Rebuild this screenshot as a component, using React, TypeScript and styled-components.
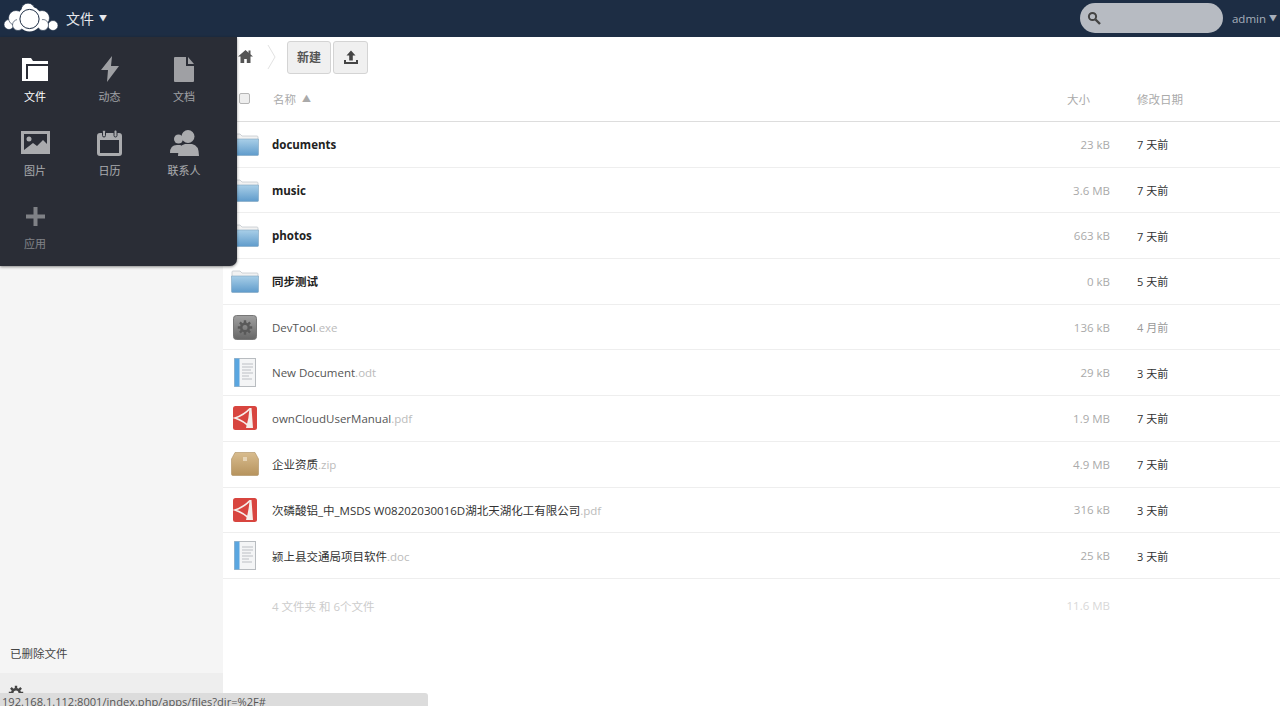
import React from 'react';
import styled, { createGlobalStyle } from 'styled-components';

const FONT = `"Open Sans", "Noto Sans CJK SC", sans-serif`;

const GlobalStyle = createGlobalStyle`
  html, body { margin: 0; padding: 0; height: 100%; overflow: hidden; background: #fff; }
  body { font-family: ${FONT}; font-size: 12px; color: #555; }
  * { box-sizing: border-box; }
`;

const Page = styled.div`
  position: relative;
  height: 706px;
  width: 1280px;
  display: flex;
  flex-direction: column;
  overflow: hidden;
`;

const Header = styled.header`
  height: 37px;
  flex: none;
  background: #1d2d44;
  display: flex;
  align-items: center;
  padding: 0 3px 1px 4px;
`;

const AppTitle = styled.div`
  margin-left: 8px;
  color: #e6e8ec;
  font-size: 14px;
  display: flex;
  align-items: center;
  gap: 5px;
`;

const Caret = styled.span`
  font-size: 8px;
  line-height: 1;
`;

const Search = styled.div`
  margin-left: auto;
  width: 143px;
  height: 30px;
  border-radius: 15px;
  background: #b7bbc2;
  display: flex;
  align-items: center;
  padding-left: 7px;
`;

const User = styled.div`
  margin-left: 9px;
  color: #a7afbb;
  font-size: 11.5px;
  display: flex;
  align-items: center;
  gap: 3px;
`;

const Body = styled.div`
  flex: 1;
  display: flex;
  min-height: 0;
`;

const Sidebar = styled.aside`
  width: 223px;
  flex: none;
  background: #f5f5f5;
  display: flex;
  flex-direction: column;
  justify-content: flex-end;
`;

const TrashLink = styled.div`
  height: 41px;
  padding: 0 0 0 10px;
  display: flex;
  align-items: center;
  font-size: 11.5px;
  color: #444;
`;

const SettingsBar = styled.div`
  height: 33px;
  background: #eee;
  padding: 12px 0 0 8px;
`;

const Main = styled.main`
  flex: 1;
  min-width: 0;
`;

const Controls = styled.div`
  height: 40px;
  display: flex;
  align-items: center;
  padding: 0 0 0 15px;
`;

const Crumb = styled.div`
  display: flex;
  align-items: center;
  margin-right: 11px;
  gap: 14px;
  margin-top: -1px;
`;

const ToolButton = styled.button<{ $wide?: boolean }>`
  width: ${p => (p.$wide ? '44px' : '35px')};
  height: 33px;
  padding: 0;
  border: 1px solid #d4d4d4;
  border-radius: 3px;
  background: #f0f0f0;
  color: #555;
  font-family: ${FONT};
  font-size: 12px;
  font-weight: 600;
  display: flex;
  align-items: center;
  justify-content: center;
  & + & { margin-left: 2px; }
`;

const COLUMNS = '49px 1fr 107px 143px';

const HeadRow = styled.div`
  height: 45px;
  display: grid;
  grid-template-columns: ${COLUMNS};
  align-items: center;
  border-bottom: 1px solid #ddd;
  color: #aaa;
  font-size: 11.5px;
`;

const CheckBox = styled.span`
  width: 11px;
  height: 11px;
  margin: 0 0 2px 16px;
  border: 1px solid #b5b5b5;
  border-radius: 2px;
  background: #eee;
`;

const HeadName = styled.div`
  padding: 0 0 0 1px;
  margin-top: -1px;
  display: flex;
  gap: 6px;
  align-items: center;
`;

const SortMark = styled.span`
  font-size: 9px;
`;

const HeadSize = styled.div`
  text-align: right;
  padding-right: 47px;
  margin-top: -1px;
`;

const HeadDate = styled.div`
  margin-top: -1px;
`;

const Row = styled.div`
  height: 45.7px;
  display: grid;
  grid-template-columns: ${COLUMNS};
  align-items: center;
  border-bottom: 1px solid #eee;
`;

const IconCell = styled.div`
  display: flex;
  justify-content: center;
  padding-right: 6px;
`;

const Name = styled.div<{ $bold?: boolean }>`
  font-size: 11.5px;
  font-weight: ${p => (p.$bold ? 700 : 400)};
  color: ${p => (p.$bold ? '#222' : '#555')};
  white-space: nowrap;
`;

const CjkName = styled(Name)`
  color: #333;
`;

const Ext = styled.span`
  color: #bbb;
`;

const Size = styled.div`
  text-align: right;
  padding-right: 27px;
  color: #aaa;
  font-size: 11.5px;
`;

const DateCell = styled.div<{ $old?: boolean }>`
  color: ${p => (p.$old ? '#999' : '#333')};
  font-size: 11px;
`;

const SummaryRow = styled.div`
  height: 54px;
  display: grid;
  grid-template-columns: ${COLUMNS};
  align-items: center;
  color: #ccc;
  font-size: 11.5px;
`;

const SummarySize = styled(Size)`
  color: #d8d8d8;
`;

const AppMenu = styled.nav`
  position: absolute;
  top: 37px;
  left: 0;
  width: 237px;
  height: 229px;
  background: #2a2d36;
  border-bottom-right-radius: 7px;
  box-shadow: 0 1px 3px rgba(0, 0, 0, 0.45);
  display: grid;
  grid-template-columns: repeat(3, 70px);
  grid-auto-rows: 73.5px;
  column-gap: 4.5px;
  padding-top: 18px;
`;

const MenuItem = styled.div<{ $level: number }>`
  display: flex;
  flex-direction: column;
  align-items: center;
  gap: 6px;
  font-size: 11px;
  line-height: 16px;
  color: #fff;
  opacity: ${p => p.$level};
`;

const IconBox = styled.div`
  width: 30px;
  height: 28px;
  display: flex;
  align-items: center;
  justify-content: center;
`;

const StatusBar = styled.div`
  position: absolute;
  left: 0;
  bottom: 0;
  width: 428px;
  height: 13px;
  padding-left: 2px;
  background: #dcdcdc;
  border-top-right-radius: 3px;
  color: #555;
  font-size: 11.1px;
  line-height: 18px;
  overflow: hidden;
  white-space: nowrap;
`;

const CloudLogo = () => (
  <svg width="54" height="30" viewBox="0 0 54 30">
    <g fill="#fff" stroke="#1d2d44" strokeWidth="0.6">
      <circle cx="5" cy="21.5" r="5" />
      <circle cx="49" cy="22.5" r="5" />
      <circle cx="12" cy="15" r="7.5" />
      <circle cx="38" cy="15" r="7.5" />
      <circle cx="14" cy="22" r="5.5" />
      <circle cx="39" cy="22" r="5.5" />
      <circle cx="24" cy="7" r="6.8" />
    </g>
    <circle cx="25.5" cy="16" r="12.5" fill="#fff" />
    <circle cx="25.5" cy="16" r="9.6" fill="#fff" stroke="#1d2d44" strokeWidth="1" />
  </svg>
);

const SearchIcon = () => (
  <svg width="14" height="14" viewBox="0 0 14 14">
    <circle cx="5.5" cy="5.5" r="3.6" fill="none" stroke="#444" strokeWidth="2" />
    <path d="M8.5 8.5 L13 13" stroke="#444" strokeWidth="2.4" />
  </svg>
);

const HomeIcon = () => (
  <svg width="15" height="13" viewBox="0 0 15 13">
    <path d="M7.5 0 L15 6.5 H12.5 V13 H8.8 V9 H6.2 V13 H2.5 V6.5 H0 Z" fill="#555" />
    <rect x="10.5" y="0.5" width="2" height="4" fill="#555" />
  </svg>
);

const CrumbArrow = () => (
  <svg width="9" height="26" viewBox="0 0 9 26">
    <path d="M1 1 L8 13 L1 25" fill="none" stroke="#e2e2e2" strokeWidth="1" />
  </svg>
);

const UploadIcon = () => (
  <svg width="16" height="15" viewBox="0 0 16 15">
    <path d="M8 0.5 L12.5 5.5 H9.8 V10.5 H6.2 V5.5 H3.5 Z" fill="#444" />
    <path d="M1 10 V14 H15 V10 H13 V12 H3 V10 Z" fill="#444" />
  </svg>
);

const GearIcon = ({ size = 16, color = '#444' }: { size?: number; color?: string }) => (
  <svg width={size} height={size} viewBox="0 0 16 16">
    <circle cx="8" cy="8" r="3.8" fill="none" stroke={color} strokeWidth="2.6" />
    <path d="M8 0.8 V3.4 M8 12.6 V15.2 M0.8 8 H3.4 M12.6 8 H15.2 M2.9 2.9 L4.8 4.8 M11.2 11.2 L13.1 13.1 M13.1 2.9 L11.2 4.8 M4.8 11.2 L2.9 13.1" stroke={color} strokeWidth="2.4" />
  </svg>
);

const FolderIcon = () => (
  <svg width="28" height="23" viewBox="0 0 28 23">
    <defs>
      <linearGradient id="folderBody" x1="0" y1="0" x2="0" y2="1">
        <stop offset="0" stopColor="#a9cfe8" />
        <stop offset="1" stopColor="#5f9bcb" />
      </linearGradient>
    </defs>
    <path d="M1 2 Q1 1 2 1 H9 L11 3 H26 Q27 3 27 4 V8 H1 Z" fill="#f2f2f2" stroke="#c4c9ce" strokeWidth="0.8" />
    <path d="M0.5 6 H27.5 V21.5 Q27.5 22.5 26.5 22.5 H1.5 Q0.5 22.5 0.5 21.5 Z" fill="url(#folderBody)" stroke="#7fa4c0" strokeWidth="0.6" />
  </svg>
);

const ExeIcon = () => (
  <svg width="24" height="25" viewBox="0 0 24 25">
    <defs>
      <linearGradient id="exeBody" x1="0" y1="0" x2="0" y2="1">
        <stop offset="0" stopColor="#a0a0a0" />
        <stop offset="1" stopColor="#666" />
      </linearGradient>
    </defs>
    <rect x="0.5" y="0.5" width="23" height="24" rx="3" fill="url(#exeBody)" stroke="#777" />
    <g transform="translate(4 4.5)"><GearIcon color="#595959" /></g>
  </svg>
);

const DocIcon = () => (
  <svg width="22" height="29" viewBox="0 0 22 29">
    <rect x="0.5" y="0.5" width="21" height="28" fill="#f4f5f6" stroke="#b8bcc0" />
    <rect x="0.5" y="0.5" width="5" height="28" fill="#5aa6e0" />
    <path d="M8 6 H19 M8 9 H19 M8 12 H17 M8 15 H19 M8 18 H15 M8 21 H18" stroke="#bcbfc3" strokeWidth="1.2" />
  </svg>
);

const PdfIcon = () => (
  <svg width="24" height="24" viewBox="0 0 24 24">
    <rect x="0" y="0" width="24" height="24" rx="2.5" fill="#d8453f" />
    <path d="M17 2.5 Q11 9 2 12 Q11 15 17 21.5" fill="none" stroke="#f6eeea" strokeWidth="1.8" />
    <path d="M16.5 2 H18.5 L20 22 H13 Q16 12 16.5 2 Z" fill="#f6eeea" />
  </svg>
);

const ZipIcon = () => (
  <svg width="28" height="24" viewBox="0 0 28 24">
    <defs>
      <linearGradient id="zipBody" x1="0" y1="0" x2="0" y2="1">
        <stop offset="0" stopColor="#d8bc8e" />
        <stop offset="1" stopColor="#b6935d" />
      </linearGradient>
    </defs>
    <path d="M4 0.5 H24 L27.5 7 V22 Q27.5 23.5 26 23.5 H2 Q0.5 23.5 0.5 22 V7 Z" fill="url(#zipBody)" stroke="#ad8f60" strokeWidth="0.6" />
    <rect x="12" y="5" width="4" height="4" fill="#e6d4b6" />
  </svg>
);

const FilesIcon = () => (
  <svg width="26" height="23" viewBox="0 0 26 23" fill="#fff">
    <path d="M0 0 H9 L11 3 H11 H26 V6 H4 V21 H26 V23 H0 Z" />
    <path d="M6 8 H26 V23 H6 Z" />
  </svg>
);

const BoltIcon = () => (
  <svg width="18" height="26" viewBox="0 0 18 26" fill="#fff">
    <path d="M11 0 L0 14 H7 L6 26 L18 10 H10 Z" />
  </svg>
);

const PageIcon = () => (
  <svg width="20" height="25" viewBox="0 0 20 25" fill="#fff">
    <path d="M1 0 H12 V9 H20 V24 Q20 25 19 25 H1 Q0 25 0 24 V1 Q0 0 1 0 Z" />
    <path d="M14 0 L20 7 H14 Z" />
  </svg>
);

const PictureIcon = () => (
  <svg width="29" height="23" viewBox="0 0 29 23">
    <path fillRule="evenodd" fill="#fff" d="M0 0 H29 V23 H0 Z M3 3 V20 H26 V3 Z" />
    <circle cx="8" cy="8" r="2.5" fill="#fff" />
    <path d="M3 19 L12 12 L16 15 L22 9 L26 13 V20 H3 Z" fill="#fff" />
  </svg>
);

const CalendarIcon = () => (
  <svg width="26" height="26" viewBox="0 0 26 26">
    <path fillRule="evenodd" fill="#fff" d="M3 3 H22 Q25 3 25 6 V23 Q25 26 22 26 H3 Q0 26 0 23 V6 Q0 3 3 3 Z M3 10 V23 H22 V10 Z" />
    <rect x="5.5" y="0" width="3" height="7" rx="1.5" fill="#fff" stroke="#2a2d36" />
    <rect x="17" y="0" width="3" height="7" rx="1.5" fill="#fff" stroke="#2a2d36" />
  </svg>
);

const ContactsIcon = () => (
  <svg width="29" height="26" viewBox="0 0 29 26" fill="#fff">
    <circle cx="8.5" cy="9" r="4.5" />
    <path d="M0 23 Q0 15 7 15 H10 Q12 15 12 19 V23 Z" />
    <circle cx="18" cy="6.5" r="6.5" />
    <path d="M8 26 Q8 15 15 14 H22 Q29 15 29 26 Z" />
  </svg>
);

const PlusIcon = () => (
  <svg width="19" height="19" viewBox="0 0 19 19" fill="#fff">
    <path d="M7.5 0 H11.5 V7.5 H19 V11.5 H11.5 V19 H7.5 V11.5 H0 V7.5 H7.5 Z" />
  </svg>
);

const menuItems = [
  { label: '文件', icon: <FilesIcon />, level: 1 },
  { label: '动态', icon: <BoltIcon />, level: 0.55 },
  { label: '文档', icon: <PageIcon />, level: 0.55 },
  { label: '图片', icon: <PictureIcon />, level: 0.6 },
  { label: '日历', icon: <CalendarIcon />, level: 0.6 },
  { label: '联系人', icon: <ContactsIcon />, level: 0.6 },
  { label: '应用', icon: <PlusIcon />, level: 0.4 },
];

const files = [
  { name: 'documents', ext: '', icon: <FolderIcon />, bold: true, size: '23 kB', date: '7 天前' },
  { name: 'music', ext: '', icon: <FolderIcon />, bold: true, size: '3.6 MB', date: '7 天前' },
  { name: 'photos', ext: '', icon: <FolderIcon />, bold: true, size: '663 kB', date: '7 天前' },
  { name: '同步测试', ext: '', icon: <FolderIcon />, bold: true, size: '0 kB', date: '5 天前' },
  { name: 'DevTool', ext: '.exe', icon: <ExeIcon />, size: '136 kB', date: '4 月前', old: true },
  { name: 'New Document', ext: '.odt', icon: <DocIcon />, size: '29 kB', date: '3 天前' },
  { name: 'ownCloudUserManual', ext: '.pdf', icon: <PdfIcon />, size: '1.9 MB', date: '7 天前' },
  { name: '企业资质', ext: '.zip', icon: <ZipIcon />, cjk: true, size: '4.9 MB', date: '7 天前' },
  { name: '次磷酸铝_中_MSDS W08202030016D湖北天湖化工有限公司', ext: '.pdf', icon: <PdfIcon />, cjk: true, size: '316 kB', date: '3 天前' },
  { name: '颍上县交通局项目软件', ext: '.doc', icon: <DocIcon />, cjk: true, size: '25 kB', date: '3 天前' },
];

export default function App() {
  return (
    <Page>
      <GlobalStyle />
      <Header>
        <CloudLogo />
        <AppTitle>文件 <Caret>▼</Caret></AppTitle>
        <Search><SearchIcon /></Search>
        <User>admin <Caret>▼</Caret></User>
      </Header>
      <Body>
        <Sidebar>
          <TrashLink>已删除文件</TrashLink>
          <SettingsBar><GearIcon /></SettingsBar>
        </Sidebar>
        <Main>
          <Controls>
            <Crumb><HomeIcon /><CrumbArrow /></Crumb>
            <ToolButton $wide>新建</ToolButton>
            <ToolButton><UploadIcon /></ToolButton>
          </Controls>
          <HeadRow>
            <CheckBox />
            <HeadName>名称 <SortMark>▲</SortMark></HeadName>
            <HeadSize>大小</HeadSize>
            <HeadDate>修改日期</HeadDate>
          </HeadRow>
          {files.map(f => {
            const Label = f.cjk ? CjkName : Name;
            return (
              <Row key={f.name}>
                <IconCell>{f.icon}</IconCell>
                <Label $bold={f.bold}>{f.name}{f.ext && <Ext>{f.ext}</Ext>}</Label>
                <Size>{f.size}</Size>
                <DateCell $old={f.old}>{f.date}</DateCell>
              </Row>
            );
          })}
          <SummaryRow>
            <span />
            <span>4 文件夹 和 6个文件</span>
            <SummarySize>11.6 MB</SummarySize>
            <span />
          </SummaryRow>
        </Main>
      </Body>
      <AppMenu>
        {menuItems.map(item => (
          <MenuItem key={item.label} $level={item.level}>
            <IconBox>{item.icon}</IconBox>
            {item.label}
          </MenuItem>
        ))}
      </AppMenu>
      <StatusBar>192.168.1.112:8001/index.php/apps/files?dir=%2F#</StatusBar>
    </Page>
  );
}
